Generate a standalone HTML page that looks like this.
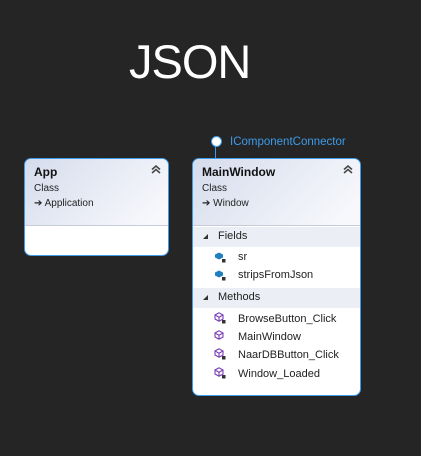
<!DOCTYPE html>
<html><head><style>
body{margin:0;width:421px;height:456px;background:#252525;font-family:"Liberation Sans",sans-serif;position:relative;overflow:hidden}
.t{position:absolute;left:129px;top:34px;color:#fff;font-size:47px;letter-spacing:-1px}
.box{position:absolute;background:#fff;border:1px solid #3d9bea;border-radius:7px;overflow:hidden}
.hd{position:absolute;left:0;right:0;top:0;background:linear-gradient(135deg,#d5dcec,#f7f8fc 90%);border-bottom:1px solid #c8ccd8}
.n{position:absolute;left:9px;top:6px;font-weight:bold;font-size:12px;color:#111}
.s{position:absolute;left:9px;font-size:10px;color:#222}
.ch{position:absolute;right:7px;top:6px;width:10px;height:9px}
.sec{position:absolute;left:0;right:0;height:20px;background:#eceef6;font-size:11px;color:#222}
.sec span{position:absolute;left:25px;top:3px}
.sec i{position:absolute;left:10px;top:7px;width:0;height:0;border-left:5px solid transparent;border-bottom:5px solid #333}
.r{position:absolute;left:45px;font-size:11px;color:#222}
.ic{position:absolute;left:21px;width:12px;height:12px}
</style></head><body>
<div class="t">JSON</div>
<div style="position:absolute;left:211px;top:136px;width:9px;height:9px;border-radius:50%;background:#fff;border:1px solid #3d9bea"></div>
<div style="position:absolute;left:215px;top:146px;width:1px;height:12px;background:#3d9bea"></div>
<div style="position:absolute;left:230px;top:136px;color:#3d9bea;font-size:11.5px">IComponentConnector</div>

<div class="box" style="left:24px;top:158px;width:143px;height:96px">
<div class="hd" style="height:66px"></div>
<div class="n">App</div><svg class="ch" viewBox="0 0 10 9"><path d="M1 4.5L5 1L9 4.5M1 8L5 4.5L9 8" fill="none" stroke="#444" stroke-width="1.5"/></svg>
<div class="s" style="top:24px">Class</div>
<div class="s" style="top:39px">➔ Application</div>
</div>

<div class="box" style="left:192px;top:158px;width:167px;height:236px">
<div class="hd" style="height:66px"></div>
<div class="n">MainWindow</div><svg class="ch" viewBox="0 0 10 9"><path d="M1 4.5L5 1L9 4.5M1 8L5 4.5L9 8" fill="none" stroke="#444" stroke-width="1.5"/></svg>
<div class="s" style="top:24px">Class</div>
<div class="s" style="top:39px">➔ Window</div>
<div class="sec" style="top:68px"><i></i><span>Fields</span></div>
<svg class="ic" style="top:92px" viewBox="0 0 12 12"><path d="M1 3.5L5 1.5L9 3.5V6.5L5 8.5L1 6.5Z" fill="#1f7fbf"/><rect x="8" y="8" width="3.5" height="3.5" fill="#333"/></svg>
<div class="r" style="top:92px">sr</div>
<svg class="ic" style="top:110px" viewBox="0 0 12 12"><path d="M1 3.5L5 1.5L9 3.5V6.5L5 8.5L1 6.5Z" fill="#1f7fbf"/><rect x="8" y="8" width="3.5" height="3.5" fill="#333"/></svg>
<div class="r" style="top:110px">stripsFromJson</div>
<div class="sec" style="top:129px"><i></i><span>Methods</span></div>
<svg class="ic" style="top:153px" viewBox="0 0 12 12"><path d="M5 0.8L9 3V7L5 9.2L1 7V3Z M1 3L5 5.2L9 3M5 5.2V9.2" fill="none" stroke="#7a3db5" stroke-width="1.1"/><rect x="8" y="8" width="3.5" height="3.5" fill="#333"/></svg>
<div class="r" style="top:154px">BrowseButton_Click</div>
<svg class="ic" style="top:171px" viewBox="0 0 12 12"><path d="M5 0.8L9 3V7L5 9.2L1 7V3Z M1 3L5 5.2L9 3M5 5.2V9.2" fill="none" stroke="#7a3db5" stroke-width="1.1"/></svg>
<div class="r" style="top:172px">MainWindow</div>
<svg class="ic" style="top:189px" viewBox="0 0 12 12"><path d="M5 0.8L9 3V7L5 9.2L1 7V3Z M1 3L5 5.2L9 3M5 5.2V9.2" fill="none" stroke="#7a3db5" stroke-width="1.1"/><rect x="8" y="8" width="3.5" height="3.5" fill="#333"/></svg>
<div class="r" style="top:190px">NaarDBButton_Click</div>
<svg class="ic" style="top:208px" viewBox="0 0 12 12"><path d="M5 0.8L9 3V7L5 9.2L1 7V3Z M1 3L5 5.2L9 3M5 5.2V9.2" fill="none" stroke="#7a3db5" stroke-width="1.1"/><rect x="8" y="8" width="3.5" height="3.5" fill="#333"/></svg>
<div class="r" style="top:209px">Window_Loaded</div>
</div>
</body></html>
